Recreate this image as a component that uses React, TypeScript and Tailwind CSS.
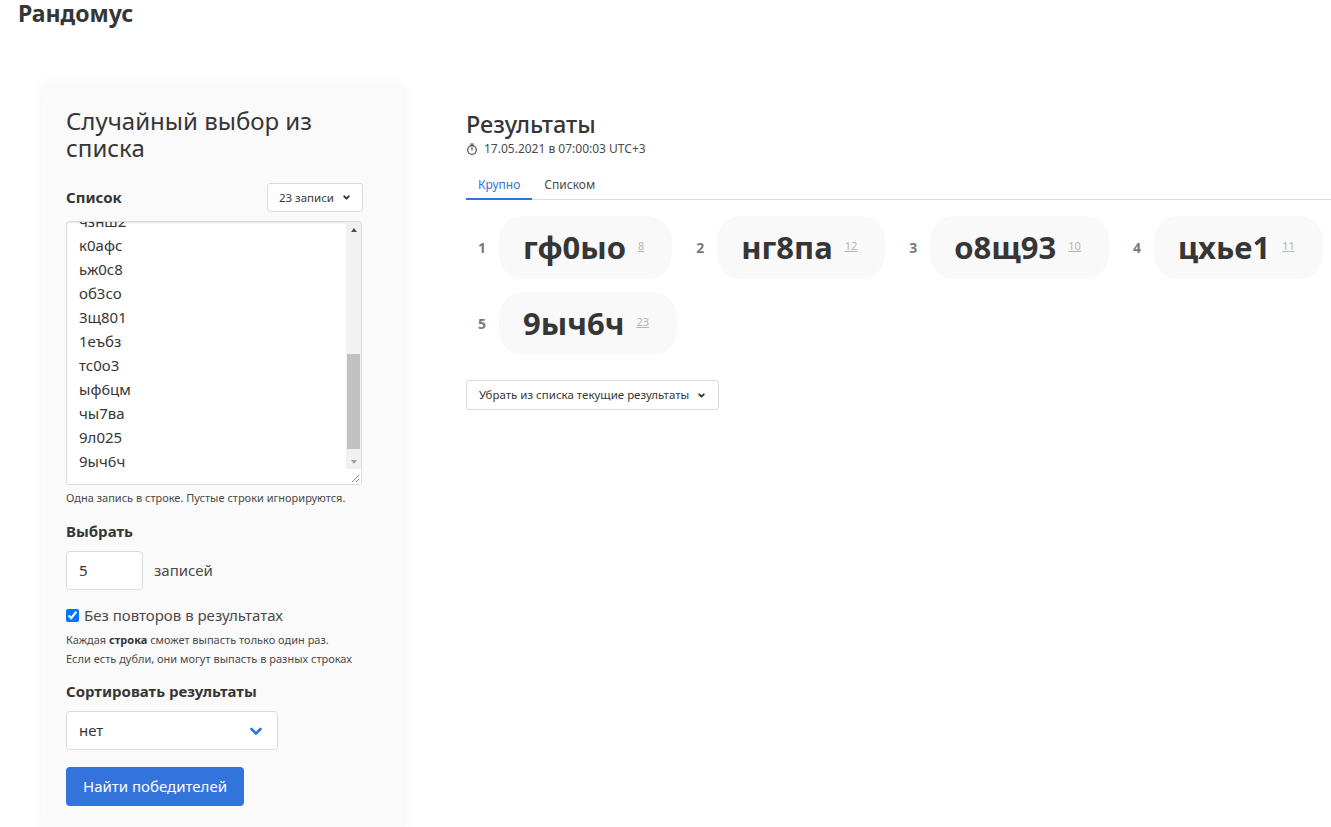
import React from 'react';

const listLines = ['чзнш2', 'к0афс', 'ьж0с8', 'об3со', '3щ801', '1еъбз', 'тс0о3', 'ыф6цм', 'чы7ва', '9л025', '9ыч6ч'];

const results = [
  { n: 1, word: 'гф0ыо', idx: 8 },
  { n: 2, word: 'нг8па', idx: 12 },
  { n: 3, word: 'о8щ93', idx: 10 },
  { n: 4, word: 'цхье1', idx: 11 },
  { n: 5, word: '9ыч6ч', idx: 23 },
];

const SmallChevron = () => (
  <svg viewBox="0 0 10 10" className="h-[9px] w-[9px]" fill="none" stroke="currentColor" strokeWidth="2.2" strokeLinecap="round" strokeLinejoin="round">
    <path d="M2.5 3.8 5 6.3 7.5 3.8" />
  </svg>
);

const TimerIcon = () => (
  <svg viewBox="0 0 12 12" className="h-[12px] w-[12px]" fill="none" stroke="currentColor" strokeWidth="1.2" strokeLinecap="round">
    <circle cx="6" cy="7" r="4.3" />
    <path d="M4.6 1h2.8M6 1v1.6M6 7V4.6" />
  </svg>
);

function FakeTextarea() {
  return (
    <div className="mt-[9px] flex h-[264px] w-[296px] overflow-hidden rounded-[3px] border border-[#dbdbdb] bg-white shadow-[inset_0_1px_2px_rgba(10,10,10,0.1)]">
      <div className="flex-1 overflow-hidden">
        <div className="-mt-[13px] pl-3 text-[15px] leading-6 text-[#363636]">
          {listLines.map((l) => (
            <div key={l}>{l}</div>
          ))}
        </div>
      </div>
      {/* полоса прокрутки */}
      <div className="flex w-[15px] flex-col">
        <div className="flex h-[15px] items-center justify-center bg-[#f1f1f1] text-[#505050]">
          <svg viewBox="0 0 8 8" className="h-[8px] w-[8px]"><path d="M4 2 7 6H1z" fill="currentColor" /></svg>
        </div>
        <div className="flex-1 bg-[#f1f1f1] px-[1px] pt-[117px]">
          <div className="h-[95px] bg-[#c1c1c1]" />
        </div>
        <div className="flex h-[15px] items-center justify-center bg-[#f1f1f1] text-[#a3a3a3]">
          <svg viewBox="0 0 8 8" className="h-[8px] w-[8px]"><path d="M4 6 7 2H1z" fill="currentColor" /></svg>
        </div>
        <div className="flex h-[15px] items-end justify-end bg-white pb-[1px] pr-[1px]">
          <svg viewBox="0 0 10 10" className="h-[10px] w-[10px]" stroke="#8a8a8a" strokeWidth="1">
            <path d="M9 2 2 9M9 6 6 9" />
          </svg>
        </div>
      </div>
    </div>
  );
}

function LeftCard() {
  return (
    <div className="w-[361px] shrink-0 rounded-md bg-[#fafafa] pb-6 pl-6 pr-10 pt-6 shadow-[0_2px_14px_rgba(0,0,0,0.06)]">
      <h2 className="text-[24px] leading-[27px] text-[#363636]">Случайный выбор из списка</h2>

      <div className="mt-[22px] flex h-[29px] items-center justify-between">
        <span className="text-[15px] font-bold text-[#363636]">Список</span>
        <button className="flex h-[29px] items-center gap-2 rounded-[3px] border border-[#dbdbdb] bg-white px-[11px] text-[11.5px] text-[#363636]">
          23 записи
          <SmallChevron />
        </button>
      </div>

      <FakeTextarea />
      <p className="mt-[5px] whitespace-nowrap text-[11px] leading-4 text-[#4a4a4a]">Одна запись в строке. Пустые строки игнорируются.</p>

      <div className="mt-[14px] text-[15px] font-bold leading-[22px] text-[#363636]">Выбрать</div>
      <div className="mt-[9px] flex items-center gap-[11px]">
        <div className="flex h-[39px] w-[77px] items-center rounded-[4px] border border-[#dbdbdb] bg-white px-3 text-[15px] text-[#363636]">5</div>
        <span className="text-[15px]">записей</span>
      </div>

      <label className="mt-[14px] flex items-center gap-[5px] text-[15px] leading-[22px]">
        <input type="checkbox" defaultChecked className="m-0 h-[13px] w-[13px]" />
        Без повторов в результатах
      </label>
      <p className="mt-1 whitespace-nowrap text-[11px] leading-[19px]">
        Каждая <b className="font-bold text-[#363636]">строка</b> сможет выпасть только один раз.
        <br />
        Если есть дубли, они могут выпасть в разных строках
      </p>

      <div className="mt-3 text-[15px] font-bold leading-[22px] text-[#363636]">Сортировать результаты</div>
      <div className="mt-[9px] flex h-[39px] w-[212px] items-center justify-between rounded-[4px] border border-[#dbdbdb] bg-white pl-3 pr-[14px] text-[15px] text-[#363636]">
        нет
        <svg viewBox="0 0 14 14" className="h-[14px] w-[14px]" fill="none" stroke="#3273dc" strokeWidth="2.6" strokeLinecap="round" strokeLinejoin="round">
          <path d="M2.5 5 7 9.5 11.5 5" />
        </svg>
      </div>

      <button className="mt-[17px] h-[39px] rounded-[4px] bg-[#3273dc] px-[17px] text-[15px] text-white">Найти победителей</button>
    </div>
  );
}

function Results() {
  return (
    <div className="min-w-0 flex-1 pt-[28px]">
      <h2 className="text-[23.5px] font-medium leading-[26px] text-[#363636]">Результаты</h2>
      <div className="mt-1 flex items-center gap-[6px] text-[12px] leading-4 text-[#4a4a4a]">
        <TimerIcon />
        17.05.2021 в 07:00:03 UTC+3
      </div>

      <div className="mt-[14px] flex border-b border-[#dbdbdb] text-[12px] leading-4">
        <div className="-mb-px border-b-2 border-[#3273dc] px-3 pb-[5px] pt-[6px] text-[#3273dc]">Крупно</div>
        <div className="px-3 pb-[5px] pt-[6px] text-[#4a4a4a]">Списком</div>
      </div>

      <div className="mt-4 flex w-[880px] flex-wrap gap-x-3 gap-y-[13px]">
        {results.map((r) => (
          <div key={r.n} className="flex items-center gap-[13px] pl-3">
            <span className="w-2 text-center text-[14px] font-bold text-[#7a7a7a]">{r.n}</span>
            <div className="flex h-[63px] items-center gap-3 rounded-[24px] bg-[#f9f9f9] pl-6 pr-7">
              <span className="text-[31px] font-bold leading-none text-[#363636]">{r.word}</span>
              <span className="-mt-[3px] text-[11px] text-[#b5b5b5] underline">{r.idx}</span>
            </div>
          </div>
        ))}
      </div>

      <button className="mt-[25px] flex h-[30px] items-center gap-2 rounded-[3px] border border-[#dbdbdb] bg-white px-3 text-[11.5px] text-[#363636]">
        Убрать из списка текущие результаты
        <SmallChevron />
      </button>
    </div>
  );
}

export default function App() {
  return (
    <div className="h-screen w-screen overflow-hidden bg-white font-['Noto_Sans','Open_Sans',sans-serif] text-[#4a4a4a]">
      <h1 className="px-[18px] pt-px text-[23px] font-bold leading-[24px] text-[#363636]">Рандомус</h1>
      <div className="flex items-start gap-[63px] pl-[42px] pt-[58px]">
        <LeftCard />
        <Results />
      </div>
    </div>
  );
}
